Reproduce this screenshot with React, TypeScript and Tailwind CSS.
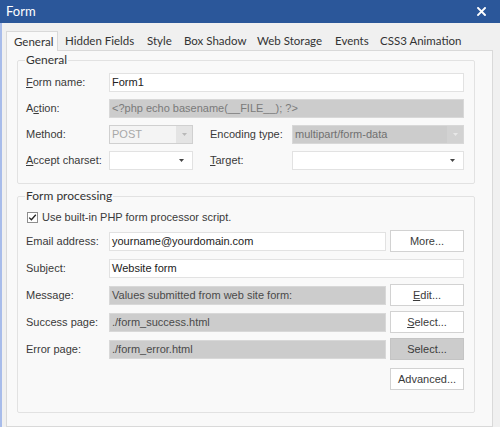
import React from 'react'

const tabs = [
  { label: 'General', w: 'w-[52px]', active: true },
  { label: 'Hidden Fields', w: 'w-[82px]' },
  { label: 'Style', w: 'w-[37px]' },
  { label: 'Box Shadow', w: 'w-[73px]' },
  { label: 'Web Storage', w: 'w-[78px]' },
  { label: 'Events', w: 'w-[45px]' },
  { label: 'CSS3 Animation', w: 'w-[95px]' },
]

const ui = "font-['Lato','Noto_Sans',sans-serif]"
const sys = "font-['Liberation_Sans',Arial,sans-serif]"

const Arrow = ({ color = '#444' }: { color?: string }) => (
  <svg width="5" height="3" viewBox="0 0 5 3">
    <polygon points="0,0 5,0 2.5,3" fill={color} />
  </svg>
)

const Label = ({ children, w = 'w-[83px]' }: { children: React.ReactNode; w?: string }) => (
  <div className={`${w} shrink-0 text-[11px] text-[#3a3a3a] ${sys}`}>{children}</div>
)

const TextBox = ({ value, disabled, dark }: { value: string; disabled?: boolean; dark?: boolean }) => (
  <div
    className={`flex-1 h-[19px] flex items-center px-[2px] border text-[11px] whitespace-nowrap ${sys} ${
      disabled
        ? `bg-[#cccccc] border-[#d8d8d8] ${dark ? 'text-[#4a4a4a]' : 'text-[#7a7a7a]'}`
        : 'bg-white border-[#e2e2e2] text-[#222]'
    }`}
  >
    {value}
  </div>
)

const Button = ({ children, pressed }: { children: React.ReactNode; pressed?: boolean }) => (
  <div
    className={`ml-[4px] w-[74px] h-[22px] shrink-0 flex items-center justify-center border text-[11px] text-[#3a3a3a] ${sys} ${
      pressed ? 'bg-[#cccccc] border-[#c4c4c4]' : 'bg-white border-[#d2d2d2]'
    }`}
  >
    {children}
  </div>
)

export default function App() {
  return (
    <div className="w-[500px] h-[427px] overflow-hidden bg-[#f0f0f0] flex flex-col">
      {/* Title bar */}
      <div className="h-[23px] shrink-0 bg-[#2b579a] flex items-center justify-between pl-[6px] pr-[14px]">
        <span className={`text-white text-[13px] ${ui}`}>Form</span>
        <svg width="9" height="9" viewBox="0 0 9 9">
          <path d="M1 1 L8 8 M8 1 L1 8" stroke="white" strokeWidth="1.9" strokeLinecap="square" />
        </svg>
      </div>

      <div className="flex flex-1 min-h-0">
        <div className="w-[2px] shrink-0 bg-[#a8bcea]" />
        <div className="flex-1 pl-[4px] pt-[8px] flex flex-col">
          {/* Tabs */}
          <div className="flex h-[20px] relative z-10">
            {tabs.map((t) => (
              <div
                key={t.label}
                className={`${t.w} shrink-0 h-[20px] pl-[7px] flex items-center whitespace-nowrap text-[11.5px] text-[#333] ${ui} ${
                  t.active ? 'bg-[#f9f9f9] border border-b-0 border-[#d9d9d9]' : ''
                }`}
              >
                {t.label}
              </div>
            ))}
          </div>

          {/* Tab panel */}
          <div className="w-[487px] flex-1 -mt-px border border-[#d9d9d9] bg-[#f9f9f9] pl-[10px] pr-[17px] pt-[1px]">
            <fieldset className="border border-[#e2e2e2] rounded-[2px] px-[8px] pr-[10px] pt-[5px] pb-[13px]">
              <legend className={`-ml-[1px] px-[1px] text-[12px] leading-[16px] text-[#333] ${ui}`}>General</legend>
              <div className="flex flex-col gap-[7px]">
                <div className="flex items-center h-[19px]">
                  <Label>
                    <span className="underline">F</span>orm name:
                  </Label>
                  <TextBox value="Form1" />
                </div>
                <div className="flex items-center h-[19px]">
                  <Label>
                    A<span className="underline">c</span>tion:
                  </Label>
                  <TextBox value="<?php echo basename(__FILE__); ?>" disabled />
                </div>
                <div className="flex items-center h-[19px]">
                  <Label>Method:</Label>
                  <div className={`w-[84px] h-[19px] flex border border-[#d0d0d0] bg-[#f4f4f4] text-[11px] text-[#a8a8a8] ${sys}`}>
                    <div className="flex-1 flex items-center px-[2px]">POST</div>
                    <div className="w-[16px] bg-[#e4e4e4] flex items-center justify-center">
                      <Arrow color="#b8b8b8" />
                    </div>
                  </div>
                  <div className="w-[17px]" />
                  <Label w="w-[82px]">Encoding type:</Label>
                  <div className={`flex-1 h-[19px] flex border border-[#d8d8d8] bg-[#cccccc] text-[11px] text-[#707070] ${sys}`}>
                    <div className="flex-1 flex items-center px-[2px]">multipart/form-data</div>
                    <div className="w-[16px] bg-[#d2d2d2] flex items-center justify-center">
                      <Arrow color="#e8e8e8" />
                    </div>
                  </div>
                </div>
                <div className="flex items-center h-[19px]">
                  <Label>
                    <span className="underline">A</span>ccept charset:
                  </Label>
                  <div className="w-[84px] h-[19px] flex items-center justify-end pr-[8px] border border-[#e2e2e2] bg-white">
                    <Arrow />
                  </div>
                  <div className="w-[17px]" />
                  <Label w="w-[82px]">
                    <span className="underline">T</span>arget:
                  </Label>
                  <div className="flex-1 h-[19px] flex items-center justify-end pr-[8px] border border-[#e2e2e2] bg-white">
                    <Arrow />
                  </div>
                </div>
              </div>
            </fieldset>

            <fieldset className="mt-[4px] border border-[#e2e2e2] rounded-[2px] px-[8px] pr-[10px] pt-[5px] pb-[22px]">
              <legend className={`-ml-[1px] px-[1px] text-[12px] leading-[16px] text-[#333] ${ui}`}>Form processing</legend>
              <div className="flex items-center h-[16px] pl-[1px] gap-[4px]">
                <div className="w-[11px] h-[11px] border border-[#8e8e8e] bg-white flex items-center justify-center">
                  <svg width="9" height="9" viewBox="0 0 9 9">
                    <path d="M1.2 4.6 L3.4 6.8 L7.8 1.8" fill="none" stroke="#222" strokeWidth="1.3" />
                  </svg>
                </div>
                <span className={`text-[11px] text-[#3a3a3a] ${sys}`}>Use built-in PHP form processor script.</span>
              </div>
              <div className="mt-[5px] flex flex-col gap-[5px]">
                <div className="flex items-center h-[22px]">
                  <Label>Email address:</Label>
                  <TextBox value="yourname@yourdomain.com" />
                  <Button>More...</Button>
                </div>
                <div className="flex items-center h-[22px]">
                  <Label>Subject:</Label>
                  <TextBox value="Website form" />
                </div>
                <div className="flex items-center h-[22px]">
                  <Label>Message:</Label>
                  <TextBox value="Values submitted from web site form:" disabled dark />
                  <Button>
                    <span className="underline">E</span>dit...
                  </Button>
                </div>
                <div className="flex items-center h-[22px]">
                  <Label>Success page:</Label>
                  <TextBox value="./form_success.html" disabled dark />
                  <Button>
                    <span className="underline">S</span>elect...
                  </Button>
                </div>
                <div className="flex items-center h-[22px]">
                  <Label>Error page:</Label>
                  <TextBox value="./form_error.html" disabled dark />
                  <Button pressed>Select...</Button>
                </div>
                <div className="flex justify-end h-[22px] mt-[3px]">
                  <Button>Advanced...</Button>
                </div>
              </div>
            </fieldset>
          </div>
        </div>
      </div>
    </div>
  )
}
